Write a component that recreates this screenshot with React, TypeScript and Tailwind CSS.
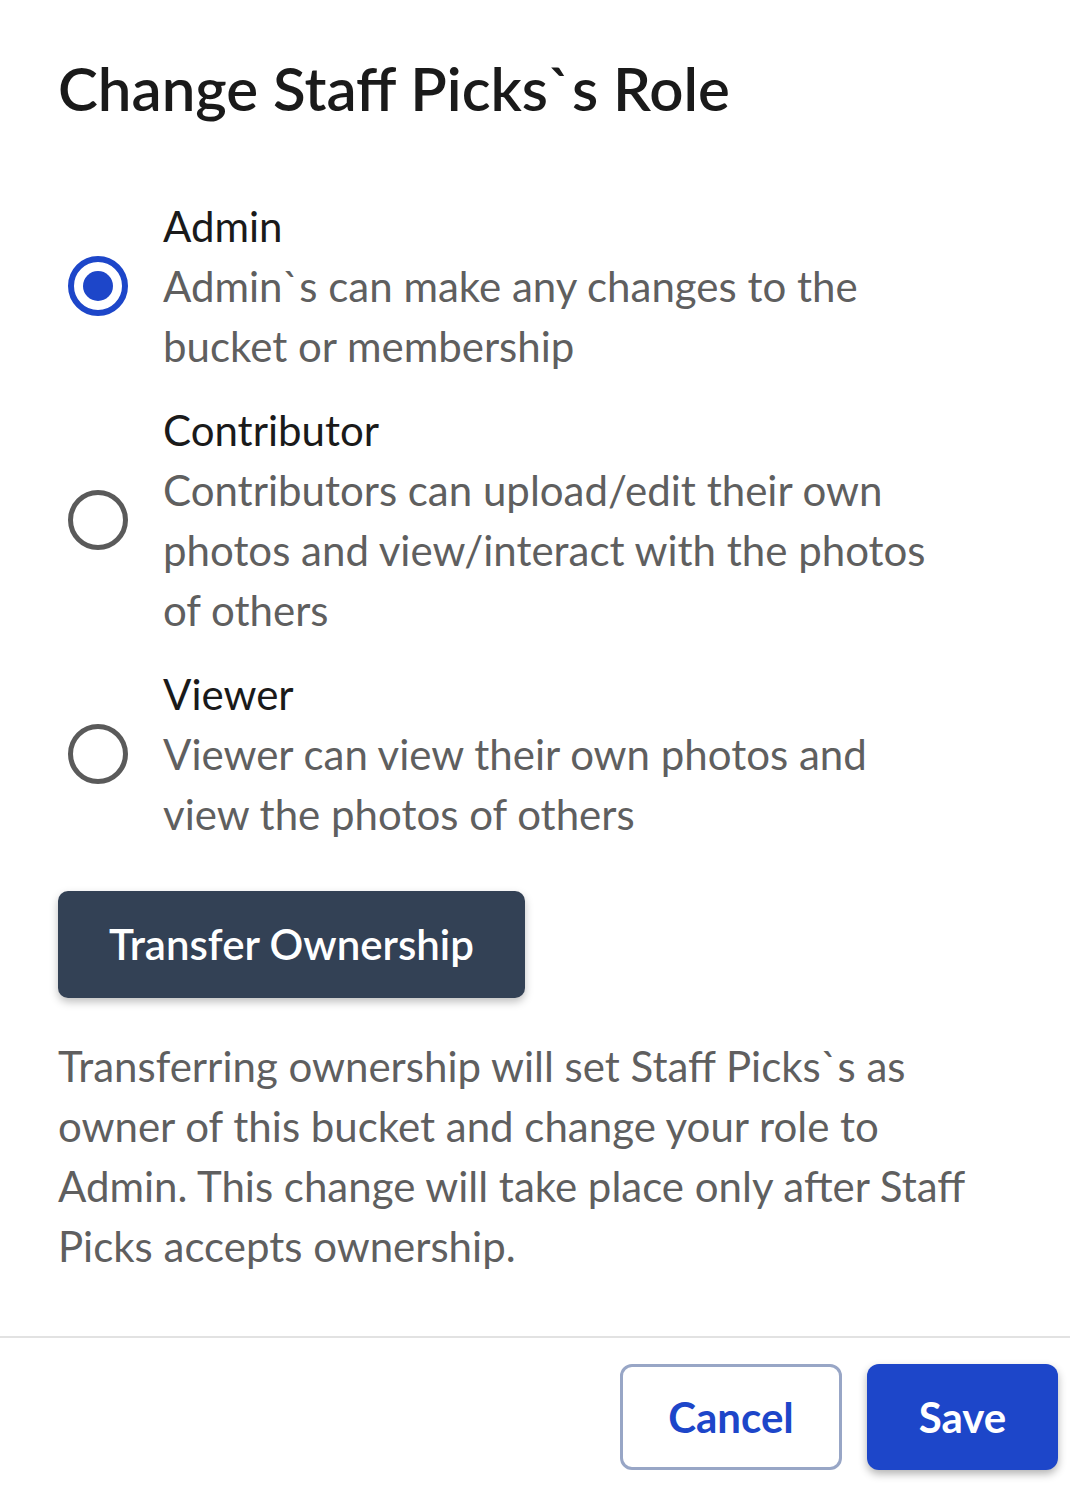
import React from "react";

const roles = [
  {
    name: "Admin",
    desc: ["Admin`s can make any changes to the", "bucket or membership"],
    checked: true,
  },
  {
    name: "Contributor",
    desc: ["Contributors can upload/edit their own", "photos and view/interact with the photos", "of others"],
    checked: false,
  },
  {
    name: "Viewer",
    desc: ["Viewer can view their own photos and", "view the photos of others"],
    checked: false,
  },
];

const para = [
  "Transferring ownership will set Staff Picks`s as",
  "owner of this bucket and change your role to",
  "Admin. This change will take place only after Staff",
  "Picks accepts ownership.",
];

function Radio({ checked }: { checked: boolean }) {
  return checked ? (
    <div className="w-[60px] h-[60px] rounded-full border-[6px] border-[#1d46c9] flex items-center justify-center shrink-0">
      <div className="w-[30px] h-[30px] rounded-full bg-[#1d46c9]" />
    </div>
  ) : (
    <div className="w-[60px] h-[60px] rounded-full border-[5px] border-[#5a5a5a] shrink-0" />
  );
}

export default function App() {
  return (
    <div
      className="w-[1070px] h-[1486px] bg-white flex flex-col overflow-hidden"
      style={{ fontFamily: "Lato, 'Noto Sans', sans-serif" }}
    >
      <div className="px-[58px] pt-[52px]">
        <h1 className="text-[60px] leading-[72px] font-semibold text-[#1a1a1a]">Change Staff Picks`s Role</h1>
        <div className="mt-[72px] flex flex-col gap-[24px]">
          {roles.map((r) => (
            <div key={r.name} className="flex items-center gap-[35px] pl-[10px]">
              <Radio checked={r.checked} />
              <div className="flex flex-col">
                <div className="text-[42px] leading-[60px] text-[#1a1a1a]">{r.name}</div>
                {r.desc.map((d) => (
                  <div key={d} className="text-[42px] leading-[60px] text-[#5f5f5f]">{d}</div>
                ))}
              </div>
            </div>
          ))}
        </div>
        <button className="mt-[47px] h-[107px] w-[467px] rounded-[10px] bg-[#334155] text-white text-[42px] font-semibold shadow-[0_4px_8px_rgba(0,0,0,0.25)] flex items-center justify-center">
          Transfer Ownership
        </button>
        <div className="mt-[38px] flex flex-col">
          {para.map((l) => (
            <div key={l} className="text-[42px] leading-[60px] text-[#5f5f5f] whitespace-nowrap">{l}</div>
          ))}
        </div>
      </div>
      <div className="mt-[60px] h-[2px] bg-[#e2e2e2]" />
      <div className="flex justify-end gap-[25px] pr-[12px] pt-[26px]">
        <button className="w-[222px] h-[106px] rounded-[12px] border-[3px] border-[#98a6c6] text-[#1d46c9] text-[42px] font-bold flex items-center justify-center">
          Cancel
        </button>
        <button className="w-[191px] h-[106px] rounded-[12px] bg-[#1d46c9] text-white text-[42px] font-bold shadow-[0_4px_8px_rgba(0,0,0,0.3)] flex items-center justify-center">
          Save
        </button>
      </div>
    </div>
  );
}
